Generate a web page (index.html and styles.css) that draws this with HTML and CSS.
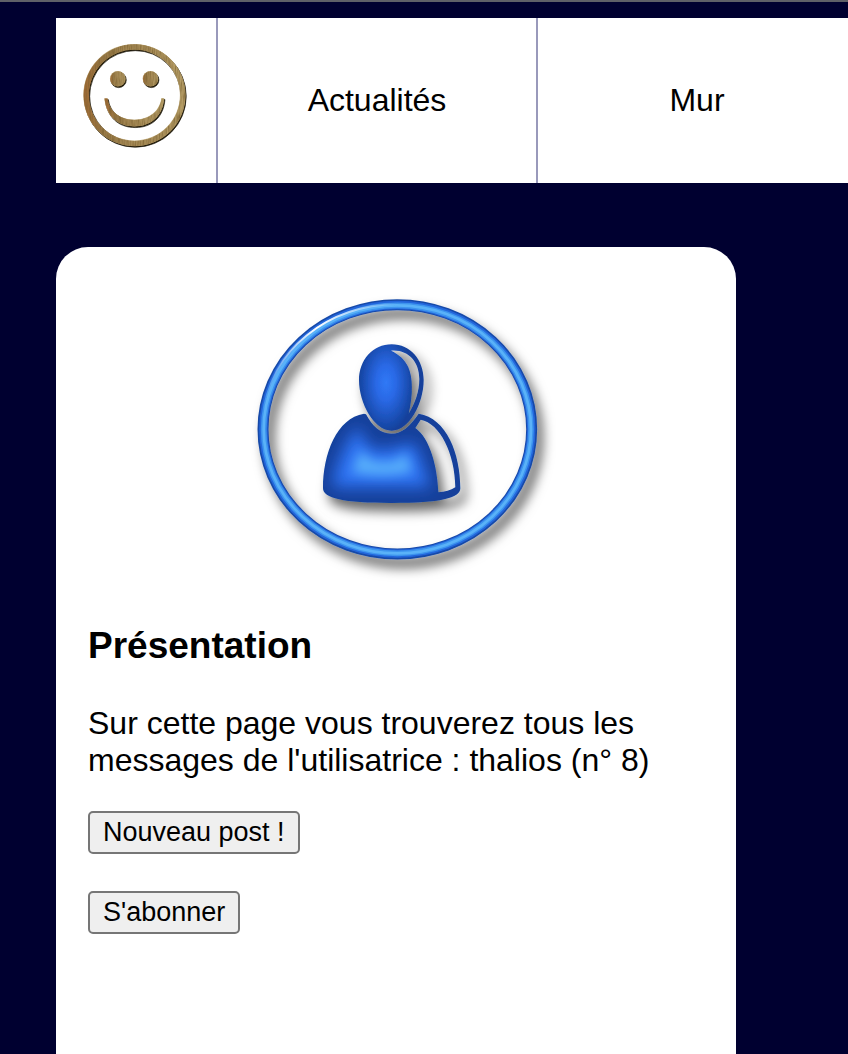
FILE: index.html
```html
<!DOCTYPE html>
<html lang="fr">
<head>
<meta charset="utf-8">
<title>Mur</title>
<link rel="stylesheet" href="styles.css">
</head>
<body>
<header class="topbar">
  <a class="logo" href="#" aria-label="Accueil">
    <svg viewBox="0 0 160 165" aria-hidden="true">
      <defs>
        <linearGradient id="wood" x1="0" x2="1">
          <stop offset="0" stop-color="#a06a35"/>
          <stop offset=".2" stop-color="#9a7c4a"/>
          <stop offset="1" stop-color="#b8a068"/>
        </linearGradient>
        <filter id="grain" x="-10%" y="-10%" width="120%" height="120%">
          <feTurbulence type="fractalNoise" baseFrequency=".25 .03" numOctaves="2" seed="4" result="n"/>
          <feColorMatrix in="n" values="0 0 0 0 .2  0 0 0 0 .12  0 0 0 0 .03  1.6 0 0 0 -.5" result="g"/>
          <feComposite in="g" in2="SourceAlpha" operator="in" result="gi"/>
          <feMerge><feMergeNode in="SourceGraphic"/><feMergeNode in="gi"/></feMerge>
        </filter>
        <g id="face">
          <path fill-rule="evenodd" d="M180 26a153 153 0 1 0 0 306a153 153 0 1 0 0-306zM180 42a137 137 0 1 1 0 274a137 137 0 1 1 0-274z"/>
          <circle cx="130" cy="130" r="23"/>
          <circle cx="228" cy="130" r="23"/>
          <path d="M90 189H99C104 228 136 253 180 253S256 228 261 189H269C265 242 230 273 180 273S95 242 90 189z"/>
        </g>
      </defs>
      <g transform="translate(19 18) scale(.333)">
        <use href="#face" fill="#1d1708" stroke="#1d1708" stroke-width="2" transform="translate(1 2)"/>
        <use href="#face" fill="#c9b78f" transform="translate(-2 -2)"/>
        <g filter="url(#grain)"><use href="#face" fill="url(#wood)" transform="translate(-1 -1)"/></g>
      </g>
    </svg>
  </a>
  <nav class="menu">
    <a class="menu-link" href="#">Actualités</a>
    <a class="menu-link" href="#">Mur</a>
  </nav>
</header>
<main class="page">
  <aside class="card">
    <svg class="avatar" viewBox="-12 -3 960 930" role="img" aria-label="Portrait de l'utilisatrice">
      <defs>
        <filter id="shadow" x="-10%" y="-10%" width="125%" height="125%">
          <feDropShadow dx="18" dy="26" stdDeviation="17" flood-color="#000" flood-opacity=".58"/>
        </filter>
        <filter id="soft" x="-40%" y="-40%" width="180%" height="180%"><feGaussianBlur stdDeviation="22"/></filter>
        <filter id="glow" x="-40%" y="-60%" width="180%" height="220%"><feGaussianBlur stdDeviation="16"/></filter>
        <filter id="thin"><feGaussianBlur stdDeviation="2"/></filter>
        <radialGradient id="head" gradientUnits="userSpaceOnUse" cx="0" cy="0" r="1" gradientTransform="translate(438 308) scale(84 148)">
          <stop offset="0" stop-color="#3079f6"/>
          <stop offset=".35" stop-color="#2a69e6"/>
          <stop offset="1" stop-color="#13419b"/>
        </radialGradient>
        <linearGradient id="shine" x1="0" x2="1"><stop offset="0" stop-color="#fff" stop-opacity="0"/><stop offset=".4" stop-color="#fff"/><stop offset="1" stop-color="#fff" stop-opacity="0"/></linearGradient>
        <clipPath id="torso"><path d="M372 401C290 415 249 520 249 625C249 655 310 669 455 669C550 669 597 660 597 637C592 560 570 475 526 444L515 430C497 450 478 461 455 461C420 461 398 440 378 403z"/></clipPath>
      </defs>
      <g filter="url(#shadow)" fill="none">
        <ellipse cx="472" cy="448" rx="403" ry="374" stroke="#174aa8" stroke-width="33"/>
        <g filter="url(#thin)">
          <ellipse cx="472" cy="448" rx="402" ry="373" stroke="#2466dc" stroke-width="25"/>
          <ellipse cx="472" cy="448" rx="401" ry="372" stroke="#3d94ee" stroke-width="17"/>
          <ellipse cx="472" cy="448" rx="401" ry="372" stroke="#5ab2f8" stroke-width="8"/>
        </g>
        <path d="M71 400C92 210 260 76 472 72" stroke="url(#shine)" stroke-width="6" filter="url(#thin)"/>
      </g>
      <g filter="url(#shadow)">
        <path fill="#13419b" fill-rule="evenodd" d="M372 401C290 415 249 520 249 625C249 655 310 669 455 669C600 669 661 655 661 625C661 520 620 415 536 401C510 440 485 461 455 461C420 461 398 440 378 403zM542 419C600 430 645 520 646 622Q625 635 595 637C592 560 570 475 526 444z"/>
        <path fill="url(#head)" fill-rule="evenodd" d="M455 193C511 193 551 240 551 300C551 370 508 452 455 452C402 452 357 370 357 300C357 240 399 193 455 193zM453 212C505 208 538 245 538 297C538 335 525 370 506 401C520 345 518 290 505 262C495 238 475 222 453 212z"/>
      </g>
      <g clip-path="url(#torso)">
        <path d="M352 440L385 500Q430 520 510 490L530 500L572 622H278Q285 535 352 440z" fill="#2f73f4" filter="url(#soft)"/>
        <path d="M362 510L392 540Q430 550 472 540L496 517L518 575Q430 596 335 577z" fill="#56adfa" filter="url(#glow)"/>
      </g>
    </svg>
    <h3 class="title">Présentation</h3>
    <p class="intro">Sur cette page vous trouverez tous les messages de l'utilisatrice : thalios (n° 8)</p>
    <div class="actions">
      <button class="btn" type="button">Nouveau post !</button>
      <button class="btn" type="button">S'abonner</button>
    </div>
  </aside>
</main>
</body>
</html>
```

FILE: styles.css
```css
* {
  box-sizing: border-box;
}

body {
  margin: 0;
  min-height: 100vh;
  display: flex;
  flex-direction: column;
  gap: 64px;
  padding: 16px 0 0 56px;
  border-top: 2px solid #5f6068;
  background: #000030;
  color: #000;
  font-family: "Liberation Sans", Arial, sans-serif;
  font-size: 32px;
  line-height: 37px;
  overflow-x: hidden;
}

.topbar {
  display: flex;
  background: #fff;
  overflow: hidden;
}

.logo {
  flex: none;
  width: 162px;
  border-right: 2px solid #9999bb;
}

.logo svg {
  display: block;
}

.menu {
  display: flex;
}

.menu-link {
  flex: 0 0 320px;
  display: flex;
  align-items: center;
  justify-content: center;
  border-right: 2px solid #9999bb;
  color: inherit;
  text-decoration: none;
}

.page {
  flex: 1;
  display: flex;
}

.card {
  width: 680px;
  padding: 32px;
  background: #fff;
  border-radius: 32px 32px 0 0;
}

.avatar {
  display: block;
  width: 320px;
  margin: 0 auto;
}

.title {
  margin: 35px 0 38px;
  font-size: 37px;
  line-height: 43px;
}

.intro {
  margin: 0 0 32px;
}

.actions {
  display: flex;
  flex-direction: column;
  align-items: flex-start;
  gap: 37px;
}

.btn {
  padding: 4px 13px;
  border: 2px solid #767676;
  border-radius: 5px;
  background: #efefef;
  color: #000;
  font-family: inherit;
  font-size: 27px;
  line-height: 31px;
}
```
